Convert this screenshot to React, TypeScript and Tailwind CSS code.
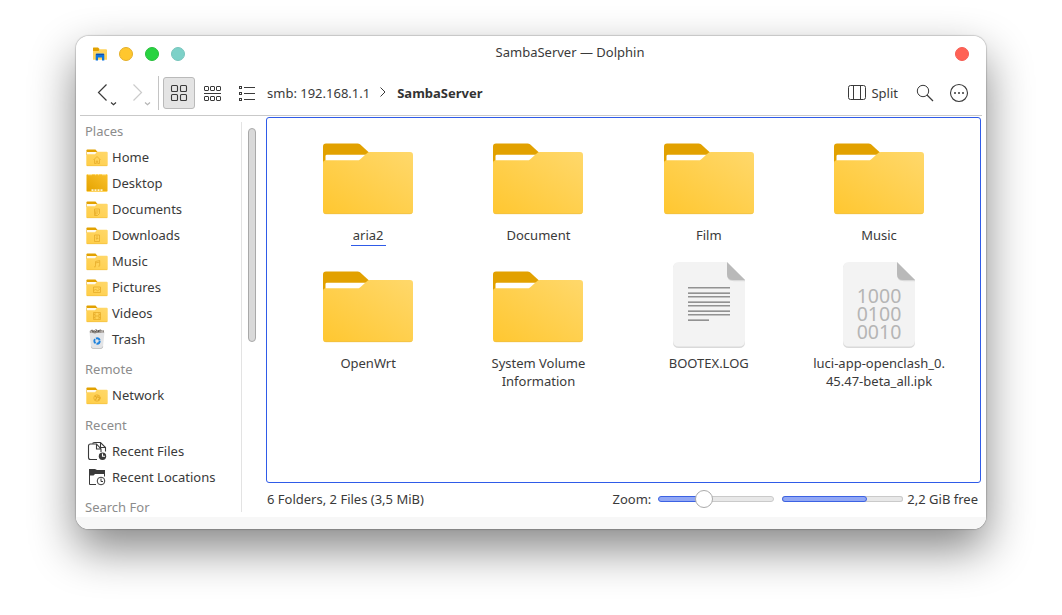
import React from "react";

const DARK = "#3a3a3a";

function BigFolder() {
  return (
    <svg width="90" height="72" viewBox="0 0 90 72" className="shrink-0">
      <defs>
        <linearGradient id="folderBody" x1="0" y1="1" x2="1" y2="0">
          <stop offset="0" stopColor="#ffc730" />
          <stop offset="1" stopColor="#ffd86b" />
        </linearGradient>
      </defs>
      <path d="M0 3.5Q0 .5 3 .5H34.5Q36 .5 37 1.3L46 9.5L38 20H0Z" fill="#e2a100" />
      <path d="M2.5 13Q2.5 11.7 4 11.7H46V20H2.5Z" fill="#fff" />
      <path d="M0 20Q0 17.3 3 17.3H34Q36 17.3 37 16.4L44.5 9.8Q45.3 9 47 9H87Q90 9 90 12V68Q90 71 87 71H3Q0 71 0 68Z" fill="url(#folderBody)" />
      <path d="M.8 70Q1.6 70.700 3 70.700H87Q88.600 70.700 89.300 69.700" fill="none" stroke="#edbd43" strokeWidth=".7" />
    </svg>
  );
}

function BigFile({ binary }: { binary?: boolean }) {
  return (
    <svg width="72" height="86" viewBox="0 0 72 86" className="block shrink-0">
      <path d="M6 1H54L72 19V80Q72 86 66 86H6Q0 86 0 80V7Q0 1 6 1Z" fill="#d9d9d9" />
      <path d="M6 0H54L72 18V78.500Q72 84.500 66 84.500H6Q0 84.500 0 78.500V6Q0 0 6 0Z" fill="#f3f3f3" />
      <path d="M54 1V12.500Q54 19.300 61 19.300H72V18Z" fill="#dadada" />
      <path d="M54 0V12Q54 18 60 18H72Z" fill="#b9b9b9" />
      {binary ? (
        <g fill="#b5b5b5" fontFamily="'Noto Sans', sans-serif" fontSize="19.5" textAnchor="middle">
          <text x="36" y="40.500">1000</text>
          <text x="36" y="58.500">0100</text>
          <text x="36" y="76.500">0010</text>
        </g>
      ) : (
        [25, 30, 34, 39, 43, 48, 52, 57].map((y, i) => (
          <g key={y}>
            <rect x="15" y={y} width={i === 7 ? 21 : 42} height="1" fill={i % 2 ? "#b5b5b5" : "#929292"} />
            <rect x="15" y={y + 1} width={i === 7 ? 21 : 42} height="1" fill={i % 2 ? "#929292" : "#c2c2c2"} />
          </g>
        ))
      )}
    </svg>
  );
}

const glyphs: Record<string, React.ReactNode> = {
  home: <path d="M7.500 11.500L11 8L14.500 11.500M8.500 11V15H10.300V12.500H11.700V15H13.500V11" />,
  documents: <path d="M8.500 8.500H13.500V13L11.500 15H8.500ZM9.500 10.500H12.500M9.500 12.500H12M8.500 9L10 15" />,
  downloads: <path d="M8.500 8.500H13.500V15H8.500ZM11 9V12.500M9.700 11.500L11 12.800L12.300 11.500" />,
  music: <path d="M9.500 14V9L13.700 8V13.300M9.500 10.500L13.700 9.500M8 14.300H9.500M12.300 13.600H13.700" />,
  pictures: <path d="M7.500 8.500H14.500V14H7.500ZM7.500 12.500L9.500 10.500L11.500 12.500L14.500 10M12.500 10H13" />,
  videos: <path d="M7.500 8H14.500V15H7.500ZM9 8V15M13 8V15M9 11.500H13M7.500 10H9M7.500 13H9M13 10H14.500M13 13H14.500" />,
  network: (
    <g>
      <circle cx="11" cy="11.500" r="3.200" />
      <path d="M9 9.500L10.800 11L9.500 13.500M12 8.700L11.800 10.500L14 11.500L12 13.800" strokeWidth="1.200" />
    </g>
  ),
};

function SmallFolder({ glyph }: { glyph: string }) {
  return (
    <svg width="22" height="22" viewBox="0 0 22 22">
      <defs>
        <linearGradient id="smallBody" x1="0" y1="1" x2="1" y2="0">
          <stop offset="0" stopColor="#ffcd45" />
          <stop offset="1" stopColor="#ffd86b" />
        </linearGradient>
      </defs>
      <path d="M.5 4.200Q.5 3.400 1.300 3.400H9.500L11.300 5.700V9H.5Z" fill="#e2a100" />
      <path d="M1 6H10.800V9H1Z" fill="#fffaec" />
      <path d="M.3 8.900Q.3 8.200 1.200 8.200H9L11 5.700H20.700Q21.700 5.700 21.700 6.700V19.200Q21.700 20 20.700 20H1.300Q.3 20 .3 19.200Z" fill="url(#smallBody)" />
      <path d="M.8 19.700H21.200" stroke="#f0be3c" strokeWidth=".6" />
      <g transform="translate(0 2.500)" fill="none" stroke="#e6ac29" strokeWidth=".8">{glyphs[glyph]}</g>
    </svg>
  );
}

function DesktopIcon() {
  return (
    <svg width="22" height="22" viewBox="0 0 22 22">
      <defs>
        <linearGradient id="desk" x1="0" y1="1" x2="1" y2="0">
          <stop offset="0" stopColor="#e5a300" />
          <stop offset="1" stopColor="#f9c02b" />
        </linearGradient>
      </defs>
      <rect x=".5" y="2" width="21" height="18" rx="1" fill="#ffd45e" />
      <path d="M.7 3H21.300V19H.7Z" fill="url(#desk)" />
      <path d="M2 2.700H6M9 2.700H10M12 2.700H13M16 2.700H20" stroke="#fff0bd" strokeWidth=".8" />
      <path d="M5.500 18.200H7.500M8.500 18.200H10.500M11.500 18.200H13.500M14.500 18.200H16.500" stroke="#fff3cb" strokeWidth="1.700" />
    </svg>
  );
}

function TrashIcon() {
  return (
    <svg width="22" height="22" viewBox="0 0 22 22">
      <path d="M3.500 4H18.500L17 19Q16.800 20.800 15 20.800H7Q5.200 20.800 5 19Z" fill="#e3e4e6" />
      <path d="M5.300 18.500Q5.400 20.500 7 20.500H15Q16.600 20.500 16.700 18.500" fill="none" stroke="#bdbdbd" strokeWidth=".8" />
      <path d="M3.700 3L6 1.500L8 2.400L10 1L12 2.500L14.500 1.300L16 2.500L18 2.300V4.500L15 5L12 4.500L9 5.500L6 4.700L4 5Z" fill="#8d8781" />
      <path d="M6 2.500L7.500 4M13 2L12 4.500M9 3.500L10.500 2.500" stroke="#4d4a49" />
      <path d="M4.500 4H6M9 2.500H10M14.500 4H17" stroke="#d6d0cd" />
      <circle cx="11" cy="13" r="2.700" fill="none" stroke="#1d82dd" strokeWidth="1.900" strokeDasharray="4.700 .955" />
    </svg>
  );
}

function RecentFilesIcon() {
  return (
    <svg width="22" height="22" viewBox="0 0 22 22" fill="none" stroke={DARK} strokeWidth="1.100">
      <path d="M11 19.500H4.500Q2.500 19.500 2.500 17.500V6Q2.500 4 4.500 4H10.500L15 9V12M10.500 4V9H15" />
      <path d="M6.500 3.500Q7.500 2.500 9 2.500H14.500L19.500 7.500V11.500M14.500 2.500V7.500H19.500" />
      <circle cx="16.500" cy="16.200" r="3.700" fill={DARK} stroke="none" />
      <path d="M16.500 13.500V16.200H19" stroke="#fff" />
    </svg>
  );
}

function RecentLocationsIcon() {
  return (
    <svg width="22" height="22" viewBox="0 0 22 22" fill="none" stroke={DARK}>
      <path d="M3 3H9L11 4H19V8H9L7.500 9.500H3Z" fill={DARK} stroke="none" />
      <path d="M3.500 8V18.500H10M18.500 7V10.500" />
      <circle cx="15" cy="15" r="3.800" />
      <path d="M15 12.500V15.500H17" />
    </svg>
  );
}

function SideHeader({ children }: { children: React.ReactNode }) {
  return <div className="flex h-[26px] shrink-0 items-center pl-[9px] text-[#8c8c8c]">{children}</div>;
}

function SideItem({ icon, label }: { icon: React.ReactNode; label: string }) {
  return (
    <div className="flex h-[26px] shrink-0 items-center gap-1 pl-[10px]">
      {icon}
      <span>{label}</span>
    </div>
  );
}

function Sidebar() {
  return (
    <aside className="flex w-[190px] shrink-0">
      <div className="flex w-[165px] flex-col gap-1 overflow-hidden pt-[2px] whitespace-nowrap">
        <div>
          <SideHeader>Places</SideHeader>
          <SideItem icon={<SmallFolder glyph="home" />} label="Home" />
          <SideItem icon={<DesktopIcon />} label="Desktop" />
          <SideItem icon={<SmallFolder glyph="documents" />} label="Documents" />
          <SideItem icon={<SmallFolder glyph="downloads" />} label="Downloads" />
          <SideItem icon={<SmallFolder glyph="music" />} label="Music" />
          <SideItem icon={<SmallFolder glyph="pictures" />} label="Pictures" />
          <SideItem icon={<SmallFolder glyph="videos" />} label="Videos" />
          <SideItem icon={<TrashIcon />} label="Trash" />
        </div>
        <div>
          <SideHeader>Remote</SideHeader>
          <SideItem icon={<SmallFolder glyph="network" />} label="Network" />
        </div>
        <div>
          <SideHeader>Recent</SideHeader>
          <SideItem icon={<RecentFilesIcon />} label="Recent Files" />
          <SideItem icon={<RecentLocationsIcon />} label="Recent Locations" />
        </div>
        <SideHeader>Search For</SideHeader>
      </div>
      <div className="mt-[6px] mb-[5px] w-px bg-[#e3e3e3]" />
      <div className="mt-3 ml-[6px] h-[214px] w-2 rounded-full border border-[#a9a9a9] bg-[#d9d9d9]" />
    </aside>
  );
}

function Entry({ icon, lines, active, file }: { icon: React.ReactNode; lines: string[]; active?: boolean; file?: boolean }) {
  return (
    <div className="flex h-32 flex-col items-center pt-2 text-center">
      <div className={file ? "flex h-[92px] shrink-0 items-start" : "flex h-[92px] shrink-0 items-start pt-[9px]"}>{icon}</div>
      <div className={active ? "h-[20px] border-b border-[#2f5be8] px-[2px] leading-[18px]" : "leading-[18px]"}>
        {lines.map((l) => (
          <div key={l}>{l}</div>
        ))}
      </div>
    </div>
  );
}

function TitleBar() {
  return (
    <header className="grid h-9 shrink-0 grid-cols-[1fr_auto_1fr] items-center">
      <div className="flex items-center gap-3 pl-4">
        <svg width="16" height="16" viewBox="0 0 16 16" className="mr-[-1px]">
          <path d="M1 2Q1 1.500 1.500 1.500H6L7.500 3V7H1Z" fill="#e2a100" />
          <path d="M1 5H6.500L8 3.300H14Q15 3.300 15 4.300V13.700H1Z" fill="#ffd35c" />
          <path d="M3.700 14.500V8.500Q3.700 7.500 4.700 7.500H11.300Q12.300 7.500 12.300 8.500V14.500H10V11.500H6V14.500Z" fill="#0c75df" />
          <path d="M4 8.500H12" stroke="#164da9" strokeWidth="1" />
        </svg>
        <span className="size-[14px] rounded-full border border-[#e3af2a] bg-[#ffc72e]" />
        <span className="size-[14px] rounded-full border border-[#27bd3c] bg-[#28d341]" />
        <span className="size-[14px] rounded-full border border-[#78c4bc] bg-[#7dd1c8]" />
      </div>
      <div className="pb-[4px] pl-[78px]">SambaServer — Dolphin</div>
      <div className="flex justify-end pr-[17px]">
        <span className="size-[14px] rounded-full border border-[#f45c52] bg-[#ff6255]" />
      </div>
    </header>
  );
}

function Toolbar() {
  return (
    <div className="mx-1 flex h-11 shrink-0 items-center border-b border-[#c9c9c9] pb-[2px]">
      <svg width="78" height="34" viewBox="0 0 78 34" fill="none">
        <path d="M26.500 8.500L18.500 16.500L26.500 24.500" stroke={DARK} strokeWidth="1.200" />
        <path d="M31 26.500L33.500 28.700L36 26.500" stroke={DARK} strokeWidth="1.200" />
        <path d="M53.500 8.500L61.500 16.500L53.500 24.500" stroke="#cbcbcb" strokeWidth="1.200" />
        <path d="M65 26.500L67.500 28.700L70 26.500" stroke="#b5b5b5" strokeWidth="1.200" />
      </svg>
      <div className="h-[34px] w-px bg-[#c4c4c4]" />
      <div className="ml-1 flex size-8 items-center justify-center rounded-[3px] border border-[#bababa] bg-[#e4e4e4]">
        <svg width="18" height="18" viewBox="0 0 18 18" fill="none" stroke={DARK} strokeWidth="1.100">
          <rect x="1.500" y="1.500" width="6" height="6" rx="1" />
          <rect x="10.500" y="1.500" width="6" height="6" rx="1" />
          <rect x="1.500" y="10.500" width="6" height="6" rx="1" />
          <rect x="10.500" y="10.500" width="6" height="6" rx="1" />
        </svg>
      </div>
      <svg width="18" height="18" viewBox="0 0 18 18" fill="none" stroke={DARK} className="ml-[9px]">
        {[0.5, 6.5, 12.5].map((x) => (
          <g key={x}>
            <rect x={x} y="2.500" width="4" height="4" rx=".5" />
            <rect x={x} y="12.500" width="4" height="4" rx=".5" />
          </g>
        ))}
        <path d="M0 9.500H17" />
      </svg>
      <svg width="18" height="18" viewBox="0 0 18 18" fill="none" stroke={DARK} className="ml-4">
        {[3.5, 9.5, 15.5].map((y) => (
          <g key={y}>
            <rect x="1.500" y={y - 1} width="2" height="2" />
            <path d={`M6 ${y}H17`} />
          </g>
        ))}
      </svg>
      <nav className="ml-[11px] flex flex-1 items-center">
        <span>smb: 192.168.1.1</span>
        <svg width="12" height="12" viewBox="0 0 12 12" fill="none" stroke={DARK} className="mb-[1px] mr-[8px] ml-[7px]">
          <path d="M3.500 1.500L8 6L3.500 10.500" />
        </svg>
        <b className="text-[#333]">SambaServer</b>
      </nav>
      <div className="flex items-center pr-[13px]">
        <svg width="20" height="18" viewBox="0 0 20 18" fill="none" stroke={DARK}>
          <rect x="1.500" y="1.500" width="17" height="14" rx="2" />
          <path d="M6.500 1.500V15.500M13.500 1.500V15.500" />
        </svg>
        <span className="ml-1">Split</span>
        <svg width="18" height="18" viewBox="0 0 18 18" fill="none" stroke={DARK} className="ml-[18px]">
          <circle cx="7" cy="7" r="5.700" />
          <path d="M11 11L17 17" strokeWidth="1.200" />
        </svg>
        <svg width="20" height="20" viewBox="0 0 20 20" fill="none" stroke={DARK} className="ml-[15px]">
          <circle cx="10" cy="10" r="8.500" strokeWidth="1.100" />
          <path d="M5 10H7M9 10H11M13 10H15" strokeWidth="1.500" />
        </svg>
      </div>
    </div>
  );
}

function StatusBar() {
  return (
    <footer className="flex h-[34px] shrink-0 items-center pr-[3px] pb-[2px] pl-[1px] whitespace-nowrap">
      <span className="flex-1">6 Folders, 2 Files (3,5 MiB)</span>
      <span>Zoom:</span>
      <div className="ml-[7px] flex w-[116px] items-center">
        <div className="h-[6px] w-[46px] rounded-l-full border border-[#3c62e3] bg-[#92a8f5]" />
        <div className="z-10 -mx-[9px] size-[18px] shrink-0 rounded-full border border-[#aaa] bg-white" />
        <div className="h-[6px] flex-1 rounded-r-full border border-[#cacaca] bg-[#e8e8e8]" />
      </div>
      <div className="mr-1 ml-2 h-[6px] w-[121px] rounded-full bg-[#e8e8e8] inset-ring inset-ring-[#cacaca]">
        <div className="h-[6px] w-[85px] rounded-full border border-[#3c62e3] bg-[#92a8f5]" />
      </div>
      <span>2,2 GiB free</span>
    </footer>
  );
}

export default function App() {
  return (
    <div className="h-[615px] w-[1062px] overflow-hidden bg-white pt-9 pl-[76px] font-['Noto_Sans',sans-serif] text-[13px] leading-[18px] text-[#3a3a3a]">
      <div className="h-[493px] w-[910px] rounded-[13px] shadow-[0_0_1px_1px_rgba(0,0,0,0.16),0_20px_46px_rgba(0,0,0,0.48)]">
        <div className="flex size-full flex-col overflow-hidden rounded-[13px] bg-white">
          <TitleBar />
          <Toolbar />
          <div className="flex min-h-0 flex-1">
            <Sidebar />
            <div className="flex flex-1 flex-col pt-px pr-[5px]">
              <main className="grid flex-1 grid-cols-[repeat(4,170.3px)] content-start rounded-[3px] border border-[#2f5be8] pt-[8px] pl-[16px]">
                <Entry icon={<BigFolder />} lines={["aria2"]} active />
                <Entry icon={<BigFolder />} lines={["Document"]} />
                <Entry icon={<BigFolder />} lines={["Film"]} />
                <Entry icon={<BigFolder />} lines={["Music"]} />
                <Entry icon={<BigFolder />} lines={["OpenWrt"]} />
                <Entry icon={<BigFolder />} lines={["System Volume", "Information"]} />
                <Entry icon={<BigFile />} lines={["BOOTEX.LOG"]} file />
                <Entry icon={<BigFile binary />} lines={["luci-app-openclash_0.", "45.47-beta_all.ipk"]} file />
              </main>
              <StatusBar />
            </div>
          </div>
          <div className="h-3 shrink-0 bg-[#f7f7f7]" />
        </div>
      </div>
    </div>
  );
}
